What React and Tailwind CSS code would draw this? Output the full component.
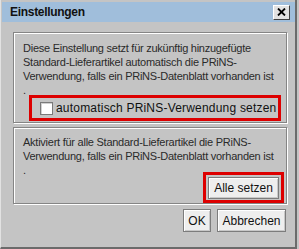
const FONT = "font-['Liberation_Sans',Arial,sans-serif]";

function Panel({ className = "", children }) {
  return (
    <div
      className={`border border-[#858585] shadow-[inset_1px_1px_0_#fff,1px_1px_0_#fff] ${className}`}
    >
      {children}
    </div>
  );
}

function Button({ className = "", children }) {
  return (
    <button
      className={`flex items-center justify-center bg-[#eeeeee] border border-[#7c7c7c] shadow-[inset_1px_1px_0_#ffffff,inset_-1px_-1px_0_#c8c8c8] text-[12px] text-[#111] leading-none ${className}`}
    >
      {children}
    </button>
  );
}

export default function App() {
  return (
    <div className={`w-[299px] h-[249px] bg-[#c4c4c4] overflow-hidden ${FONT}`}>
      <div className="w-[297px] h-[249px] border-l border-l-[#e2e2e2] border-r-2 border-b-2 border-r-[#6b6b6b] border-b-[#6b6b6b] pt-[2px] pl-[1px] flex flex-col">
        {/* title bar */}
        <div className="h-[20px] w-[293px] bg-[#a0bedb] flex items-center justify-between pl-[8px] pr-[5px]">
          <span className="text-[12px] font-bold text-[#111] tracking-[-0.3px]">Einstellungen</span>
          <div className="w-[17px] h-[15px] bg-[#e2e2e2] border border-t-white border-l-white border-r-[#404040] border-b-[#404040] flex items-center justify-center">
            <svg width="9" height="8" viewBox="0 0 9 8">
              <path d="M1 0.5 L8 7.5 M8 0.5 L1 7.5" stroke="#000" strokeWidth="1.8" />
            </svg>
          </div>
        </div>

        <div className="ml-[11px] w-[274px] flex flex-col">
          {/* panel 1 */}
          <Panel className="mt-[10px] h-[91px] pt-[8px] pl-[9px]">
            <p className="text-[11px] leading-[14px] text-[#2a2a2a] tracking-[-0.25px] whitespace-nowrap">
              Diese Einstellung setzt für zukünftig hinzugefügte
              <br />
              Standard-Lieferartikel automatisch die PRiNS-
              <br />
              Verwendung, falls ein PRiNS-Datenblatt vorhanden ist
              <br />.
            </p>
            <div className="-mt-[2px] ml-[6px] w-[252px] h-[26px] border-[3px] border-[#dd0000] flex items-center pl-[8px] gap-[3px]">
              <span className="w-[13px] h-[13px] bg-white border border-[#7a7a7a] shadow-[inset_1px_1px_0_#d0d0d0]" />
              <span className="text-[12px] text-[#111] tracking-[0.2px] whitespace-nowrap">
                automatisch PRiNS-Verwendung setzen
              </span>
            </div>
          </Panel>

          {/* panel 2 */}
          <Panel className="mt-[4px] pt-[7px] pl-[9px]">
            <p className="text-[11px] leading-[14px] text-[#2a2a2a] tracking-[-0.25px] whitespace-nowrap">
              Aktiviert für alle Standard-Lieferartikel die PRiNS-
              <br />
              Verwendung, falls ein PRiNS-Datenblatt vorhanden ist
              <br />.
            </p>
            <div className="flex justify-end pr-[2px] -mt-[5px]">
              <div className="border-[3px] border-[#dd0000] pt-[2px] px-[2px] pb-[1px]">
                <Button className="w-[71px] h-[22px]">Alle setzen</Button>
              </div>
            </div>
          </Panel>

          {/* buttons */}
          <div className="mt-[5px] flex justify-end gap-[6px] pr-[1px]">
            <Button className="w-[28px] h-[23px]">OK</Button>
            <Button className="w-[69px] h-[23px]">Abbrechen</Button>
          </div>
        </div>
      </div>
    </div>
  );
}
